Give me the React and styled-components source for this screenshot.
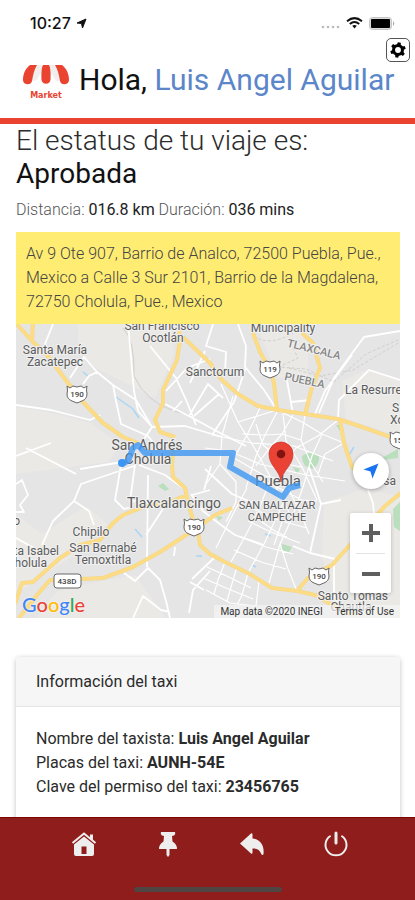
import styled, { createGlobalStyle } from "styled-components"

const red = "#ea432f"
const darkRed = "#8f1d1b"
const blue = "#5b86c9"
const yellow = "#ffec73"
const black = "#2b2b2b"

const yellowRoads = [
  "M-2 -3 L17 18 L31 31 L52 59 L67 78 L87 99 L107 113 L122 119",
  "M17 -3 L16 16",
  "M163 6 L164 16 L161 36 L147 66 L147 79 L139 96 L144 108 L159 113",
  "M157 126 L156 141 L157 153 L169 164 L171 174 L178 200",
  "M167 13 L194 39 L206 56 L222 70 L242 82 L262 86 L289 90 L322 95 L349 104 L386 117",
  "M237 9 L244 28 L254 46 L258 59 L261 86",
  "M286 9 L297 19 L304 44 L296 63 L289 91",
  "M324 96 L328 119 L336 143 L350 158",
  "M386 168 L369 182 L350 203 L334 221 L316 241 L292 254 L281 267",
  "M182 207 L184 221 L194 230 L209 238 L232 249 L256 264 L281 267 L299 271 L316 281 L338 290",
  "M-1 280 L1 274 L6 259 L17 258 L44 234 L64 221 L84 216 L97 199 L107 191 L127 183 L151 179 L171 171",
  "M3 294 L21 271 L34 256 L66 255 L87 254 L117 243 L144 228 L167 213 L181 204 L199 191 L216 184",
]

const whiteRoads = [
  "M37 0 L29 20 L33 30",
  "M0 81 L35 86 L74 96 L84 91",
  "M67 60 L73 52 L81 48 L97 61 L120 76 L136 103",
  "M54 54 L68 33 L81 48",
  "M112 0 L118 67 L122 87 L136 103",
  "M97 61 L100 77 L105 100 L132 112 L145 128",
  "M136 103 L169 102 L206 113",
  "M136 103 L125 120 L106 138 L64 145",
  "M134 22 L160 54 L171 78 L180 101",
  "M194 35 L171 44 L150 67",
  "M149 80 L173 92 L192 60 L207 74",
  "M173 92 L206 110 L230 122",
  "M157 87 L166 77 M178 92 L203 70",
  "M189 27 L174 59 M197 0 L190 22 L210 28 L209 50",
  "M222 0 L230 22 L229 43 L248 66 L261 86",
  "M230 43 L218 78 L196 111",
  "M384 7 L348 13 L318 54 L303 89",
  "M384 56 L353 46 L323 76 L322 95",
  "M336 31 L309 67 L299 90",
  "M270 51 L277 90 M275 78 L295 76",
  "M0 160 L6 156 L12 171 L4 181 L8 188 L0 188",
  "M118 142 L65 160 L58 177 L37 197 L26 221",
  "M58 177 L73 187 L78 201",
  "M105 141 L99 176 L108 185 L116 183",
  "M119 141 L114 177 L131 178 M123 141 L149 151 L167 164",
  "M132 151 L131 243 M130 211 L147 185",
  "M108 249 L119 257 L132 244 L144 256 L150 277 L154 294",
  "M117 294 L127 272 L145 286 L154 288",
  "M173 289 L177 266 L194 247 M176 255 L198 234 M174 258 L188 266",
  "M159 223 L158 232 M175 170 L187 187 L205 201 L219 211 L248 221",
  "M189 145 L216 170 L240 180",
  "M194 166 L176 171 M195 142 L188 166",
  "M325 176 L305 180 L300 202 L294 229 L277 222",
  "M294 229 L319 235 M305 180 L293 143",
  "M352 166 L357 179 L358 190",
  "M318 241 L318 275 L338 290",
  "M0 132 L35 119 M0 214 L18 224 M60 150 L10 124",
]

// the dense street grid round the city centre
const streets = [
  "M205 60 L222 98 L239 125 L255 154 L276 194",
  "M217 72 L206 112 L204 140 L190 160",
  "M222 98 L261 86 L286 98 L306 110 L328 119",
  "M262 86 L249 111 L240 132 L230 164",
  "M244 84 L231 111 L218 134",
  "M277 91 L266 110 L252 126 L240 142",
  "M322 96 L302 112 L280 124 L262 148",
  "M196 111 L236 119 L278 122 L317 137",
  "M189 124 L213 127 L244 140 L290 151 L329 157",
  "M218 134 L249 152 L286 159",
  "M267 90 L270 117 L286 143 L301 176",
  "M289 91 L285 116 L294 137 L307 158",
  "M306 110 L296 132 L287 163 L276 194 L264 220 L253 259",
  "M328 119 L309 130 L302 150",
  "M255 154 L245 180 L233 205 L215 238",
  "M276 161 L262 190 L248 220 L232 249",
  "M231 164 L218 188 L200 224",
  "M238 185 L262 196 L291 204",
  "M232 197 L255 208 L284 219",
  "M225 213 L250 223 L277 230",
  "M218 226 L245 238 L270 245",
  "M264 220 L272 245 L281 267",
  "M255 160 L286 176 L301 177",
  "M246 198 L259 207 L271 213 M266 198 L258 221",
  "M209 238 L202 256 L198 270",
  "M221 243 L215 263 L211 277",
  "M232 249 L226 271 L221 281",
  "M243 257 L240 282",
  "M191 243 L215 254 L235 264",
  "M187 254 L210 264 L237 275",
  "M190 266 L214 279 L239 282",
  "M204 140 L220 158 L220 178 L210 198",
  "M240 100 L247 121 L270 140 L286 143",
  "M226 110 L249 111 L266 110 L285 116",
  "M272 164 L285 190 L293 210",
]

const labels = [
  { x: 39, y: 30, text: "Santa María" },
  { x: 39, y: 42, text: "Zacatepec" },
  { x: 146, y: 6, text: "San Francisco" },
  { x: 147, y: 18, text: "Ocotlán" },
  { x: 267, y: 8, text: "Municipality" },
  { x: 199, y: 52, text: "Sanctorum" },
  { x: 329, y: 70, text: "La Resurre", anchor: "start" },
  { x: 376, y: 88, text: "S", anchor: "start" },
  { x: 374, y: 100, text: "Xo", anchor: "start" },
  { x: 131, y: 126, text: "San Andrés", size: 14 },
  { x: 132, y: 140, text: "Cholula", size: 14 },
  { x: 262, y: 162, text: "Puebla", size: 15 },
  { x: 261, y: 185, text: "SAN BALTAZAR", size: 11 },
  { x: 261, y: 197, text: "CAMPECHE", size: 11 },
  { x: 158, y: 184, text: "Tlaxcalancingo", size: 14 },
  { x: 75, y: 212, text: "Chipilo" },
  { x: 4, y: 201, text: "o", anchor: "end" },
  { x: 43, y: 231, text: "Santa Isabel", anchor: "end" },
  { x: 31, y: 243, text: "Cholula", anchor: "end" },
  { x: 87, y: 228, text: "San Bernabé" },
  { x: 87, y: 240, text: "Temoxtitla" },
  { x: 372, y: 276, text: "Santo Tomas", anchor: "end" },
  { x: 335, y: 287, text: "Chautla" },
  { x: 380, y: 161, text: "Rosa", anchor: "end" },
]

const shields = [
  { x: 61, y: 70, text: "190" },
  { x: 254, y: 45, text: "119" },
  { x: 178, y: 203, text: "190" },
  { x: 303, y: 252, text: "190" },
  { x: 384, y: 116, text: "150" },
]

const Shield = ({ x, y, text }) => (
  <g transform={`translate(${x} ${y})`}>
    <path
      d="M-10 -8 L-7 -6 L-4 -8 L0 -7 L4 -8 L7 -6 L10 -8 Q9 -4 10 0 Q10 5 5 7 L0 9 L-5 7 Q-10 5 -10 0 Q-9 -4 -10 -8 Z"
      fill="#fff"
      stroke="#666"
    />
    <ShieldText y="3">{text}</ShieldText>
  </g>
)

const MapDrawing = () => (
  <MapSvg viewBox="0 0 384 294" preserveAspectRatio="xMidYMid slice" aria-label="Mapa del viaje">
    <rect width="384" height="294" fill="#e5e5e5" />
    <g fill="#ebe9e5">
      <path d="M0 83 L36 89 L75 99 L104 121 L92 138 L0 150 Z" />
      <path d="M62 0 H155 L158 30 L139 74 L116 62 L80 44 L62 28 Z" />
      <path d="M0 190 L26 210 L70 182 L92 200 L60 230 L0 270 Z" />
      <path d="M60 262 L119 251 L150 294 H20 L40 268 Z" />
      <path d="M326 57 L352 45 L384 55 V112 L330 95 Z" />
      <path d="M240 0 H292 L292 56 L262 54 Z" />
      <path d="M308 178 L350 164 L384 173 V294 H330 L306 235 Z" />
    </g>
    <g fill="#b9dfbd">
      <path d="M286 132 Q294 125 303 132 Q304 141 296 145 Q286 143 286 132 Z" />
      <path d="M142 162 l5 -3 l6 6 l-4 2 Z" />
      <path d="M266 220 l10 3 l-3 5 l-8 -2 Z" />
      <path d="M377 185 L384 178 V207 L378 203 Z" />
      <path d="M320 101 l7 0 l-3 6 Z M360 137 l22 -12 v9 Z M277 143 l7 2 l-3 5 Z M200 192 l7 1 l-4 4 Z" />
    </g>
    <g stroke="#a9d6f5" strokeWidth="1.5" fill="none">
      <path d="M100 73 L117 85 L123 94 M67 48 L72 52 M119 205 L126 213 M249 210 l6 2 M236 241 l4 2 M180 232 h6 M333 131 l5 -8" />
    </g>
    <g stroke="#cfcfcf" fill="none">
      <path d="M107 4 Q119 16 118 52 Q130 78 158 87 L178 92" />
      <path d="M238 12 Q253 23 277 9 M277 24 L282 34 L263 43 L290 45 L318 58 L350 30 L384 15" strokeDasharray="3 2" />
      <path d="M273 44 L304 52 L337 46 L384 18" strokeDasharray="3 2" />
    </g>
    <g stroke="#fff" fill="none" strokeLinejoin="round">
      <path d={whiteRoads.join(" ")} strokeWidth="1.8" />
      <path d={streets.join(" ")} strokeWidth="1.2" />
    </g>
    <g fill="none" strokeLinejoin="round">
      <path d={yellowRoads.join(" ")} stroke="#f1d68c" strokeWidth="4" />
      <path d={yellowRoads.join(" ")} stroke="#fddc84" strokeWidth="3" />
    </g>
    {shields.map((shield) => (
      <Shield key={`${shield.x}-${shield.y}`} {...shield} />
    ))}
    <rect x="38" y="250" width="27" height="14" rx="3" fill="#fff" stroke="#666" />
    <ShieldText x="51" y="260">438D</ShieldText>
    {labels.map(({ x, y, text, size, anchor }) => (
      <Label key={`${text}-${y}`} x={x} y={y} $size={size} $anchor={anchor}>
        {text}
      </Label>
    ))}
    <StateLabel transform="translate(297 29) rotate(14)">TLAXCALA</StateLabel>
    <StateLabel transform="translate(288 60) rotate(12)">PUEBLA</StateLabel>
    <path
      d="M107 139 L112 137 L117 124 L122 121 L129 129 L217 129 L214 143 L267 173 L273 164 L284 161"
      stroke="#3c96f3"
      strokeOpacity="0.8"
      strokeWidth="6"
      strokeLinejoin="round"
      fill="none"
    />
    <circle cx="106" cy="139" r="4" fill="#3c96f3" />
    <path
      d="M265 158 C264 146 253 142 253 130 A12 12 0 0 1 277 130 C277 142 266 146 265 158 Z"
      fill="#ea4335"
      stroke="#c5332a"
      strokeWidth="0.7"
    />
    <circle cx="265" cy="130" r="4.3" fill="#811411" />
  </MapSvg>
)

const MarketLogo = () => (
  <LogoWrapper>
    <svg width="48" height="24" viewBox="0 -2 48 24" aria-hidden="true">
      <path d="M14 1 H34 L39 15 Q35 20 32 14 L30 10 H27 L28 1 H20 L21 10 H18 L16 14 Q13 20 9 15 Z" fill="#f1eeee" />
      <path d="M8 1 H15 C12 6 11 11 10 17 A4.600 4.600 0 0 1 1 16 C1 9 4 4 8 1 Z" fill={red} />
      <path d="M21 1 H27 Q29 4 28.500 16 A4.600 4.600 0 0 1 19.500 16 Q19 4 21 1 Z" fill={red} />
      <path d="M33 1 H40 C44 4 47 9 47 16 A4.600 4.600 0 0 1 38 17 C37 11 36 6 33 1 Z" fill={red} />
    </svg>
    <LogoText>Market</LogoText>
  </LogoWrapper>
)

const App = () => (
  <Page>
    <GlobalStyle />
    <Header>
      <StatusBar>
        <Time>
          10:27
          <svg width="11" height="11" viewBox="0 0 11 11" aria-hidden="true">
            <path d="M10 1 L6.500 10 L5.500 5.500 L1 5 Z" fill="#111" stroke="#111" strokeLinejoin="round" />
          </svg>
        </Time>
        <StatusIcons>
          <svg width="19" height="4" viewBox="0 0 19 4" fill="#bbb" aria-hidden="true">
            <circle cx="2" cy="2" r="1.3" />
            <circle cx="7" cy="2" r="1.3" />
            <circle cx="12" cy="2" r="1.3" />
            <circle cx="17" cy="2" r="1.3" />
          </svg>
          <svg width="17" height="12" viewBox="0 0 17 12" fill="none" stroke="#111" strokeWidth="2" aria-hidden="true">
            <path d="M1 4.200 Q8.500 -2 16 4.200" />
            <path d="M3.800 7 Q8.500 3 13.200 7" />
            <path d="M6.200 8.800 Q8.500 7.200 10.800 8.800 L8.500 11.500 Z" fill="#111" stroke="none" />
          </svg>
          <svg width="26" height="13" viewBox="0 0 26 13" aria-hidden="true">
            <rect x="0.500" y="0.500" width="22" height="12" rx="3" fill="#ddd" stroke="#c4c4c4" />
            <rect x="2" y="2" width="19" height="9" rx="1" fill="#000" />
            <path d="M24 4 Q26.500 6.500 24 9 Z" fill="#aaa" />
          </svg>
        </StatusIcons>
      </StatusBar>
      <SettingsButton type="button" aria-label="Ajustes">
        <svg width="16" height="16" viewBox="-9 -9 18 18" aria-hidden="true">
          <circle r="5" fill="none" stroke="#000" strokeWidth="3.4" />
          <g fill="#000">
            {[0, 60, 120, 180, 240, 300].map((angle) => (
              <path key={angle} d="M-2.200 -5 L-1.700 -8.600 H1.700 L2.200 -5 Z" transform={`rotate(${angle + 10})`} />
            ))}
          </g>
        </svg>
      </SettingsButton>
      <Brand>
        <MarketLogo />
        <Greeting>
          Hola, <span>Luis Angel Aguilar</span>
        </Greeting>
      </Brand>
    </Header>
    <Main>
      <Status>
        El estatus de tu viaje es: <strong>Aprobada</strong>
      </Status>
      <Distance>
        Distancia: <b>016.8 km</b> Duración: <b>036 mins</b>
      </Distance>
      <Address>
        Av 9 Ote 907, Barrio de Analco, 72500 Puebla, Pue., Mexico a Calle 3 Sur 2101, Barrio de la
        Magdalena, 72750 Cholula, Pue., Mexico
      </Address>
      <MapWrapper>
        <MapDrawing />
        <GoogleLogo>
          <Letter $color="#4285f4">G</Letter>
          <Letter $color="#ea4335">o</Letter>
          <Letter $color="#fbbc05">o</Letter>
          <Letter $color="#4285f4">g</Letter>
          <Letter $color="#34a853">l</Letter>
          <Letter $color="#ea4335">e</Letter>
        </GoogleLogo>
        <Attribution>
          <span>Map data ©2020 INEGI</span>
          <a href="#terms">Terms of Use</a>
        </Attribution>
        <MapControls>
          <LocateButton type="button" aria-label="Mi ubicación">
            <svg width="16" height="16" viewBox="0 0 16 16" aria-hidden="true">
              <path d="M15.500 0.500 L9.500 15.500 L7.500 8.500 L0.500 6.500 Z" fill="#1a73f0" />
            </svg>
          </LocateButton>
          <ZoomGroup>
            <ZoomButton type="button" aria-label="Acercar">
              <svg width="18" height="18" viewBox="0 0 18 18" aria-hidden="true">
                <path d="M9 0 V18 M0 9 H18" stroke="#5f5f5f" strokeWidth="4" />
              </svg>
            </ZoomButton>
            <ZoomButton type="button" aria-label="Alejar">
              <svg width="18" height="18" viewBox="0 0 18 18" aria-hidden="true">
                <path d="M0 9 H18" stroke="#5f5f5f" strokeWidth="4" />
              </svg>
            </ZoomButton>
          </ZoomGroup>
        </MapControls>
      </MapWrapper>
      <Card>
        <CardHeader>Información del taxi</CardHeader>
        <CardBody>
          <p>
            Nombre del taxista: <b>Luis Angel Aguilar</b>
          </p>
          <p>
            Placas del taxi: <b>AUNH-54E</b>
          </p>
          <p>
            Clave del permiso del taxi: <b>23456765</b>
          </p>
        </CardBody>
      </Card>
    </Main>
    <Footer>
      <Nav>
        <NavLink href="#inicio" aria-label="Inicio">
          <svg width="26" height="26" viewBox="0 0 26 26" aria-hidden="true">
            <path d="M1.500 12 L13 2.500 L24.500 12" fill="none" stroke="#eee" strokeWidth="2" />
            <path d="M19 3.500 H22 V10 L19 7 Z" fill="#eee" />
            <path
              d="M13 5.500 L23 13.500 V23 Q23 25 21 25 H5 Q3 25 3 23 V13.500 Z M10.500 15.500 V23 H15.500 V15.500 Z"
              fill="#eee"
              fillRule="evenodd"
            />
          </svg>
        </NavLink>
        <NavLink href="#viaje" aria-label="Viaje">
          <svg width="26" height="26" viewBox="0 0 26 26" fill="#eee" aria-hidden="true">
            <path d="M6 1 H20 Q21 3 19 4.500 L17 5 L17.500 10.500 Q22 13 22 18 H4 Q4 13 8.500 10.500 L9 5 L7 4.500 Q5 3 6 1 Z" />
            <path d="M11.500 18 H14.500 V24 L13 26 L11.500 24 Z" />
          </svg>
        </NavLink>
        <NavLink href="#regresar" aria-label="Regresar">
          <svg width="26" height="26" viewBox="0 0 26 26" fill="#eee" aria-hidden="true">
            <path d="M1 12.500 L12 2.500 Q13.500 1.500 13.500 3.500 V7.500 C21 8 25.500 14 24.500 23 Q24 24.500 22.500 23.500 C21 19 18 17 13.500 17.500 V21.500 Q13.500 23.500 12 22.500 Z" />
          </svg>
        </NavLink>
        <NavLink href="#salir" aria-label="Salir">
          <svg width="26" height="26" viewBox="0 0 26 26" fill="none" stroke="#eee" aria-hidden="true">
            <path d="M7 5.200 A10.500 10.500 0 1 0 19 5.200" strokeWidth="2" strokeLinecap="round" />
            <path d="M13 2 V12" strokeWidth="3" strokeLinecap="round" />
          </svg>
        </NavLink>
      </Nav>
      <HomeIndicator />
    </Footer>
  </Page>
)

export default App

const GlobalStyle = createGlobalStyle`
  * {
    box-sizing: border-box;
  }
  body {
    margin: 0;
    background-color: #fff;
    color: ${black};
    font-family: Roboto, "Liberation Sans", sans-serif;
    font-size: 16px;
    line-height: 24px;
  }
  h1, h2, p {
    margin: 0;
  }
  button {
    padding: 0;
    border: 0;
    background-color: #fff;
  }
  svg {
    display: block;
  }
`

const Page = styled.div`
  display: flex;
  flex-direction: column;
  height: 100vh;
`

const Header = styled.header`
  display: flex;
  flex-direction: column;
  flex-shrink: 0;
  border-bottom: 6px solid ${red};
`

const StatusBar = styled.div`
  display: flex;
  justify-content: space-between;
  align-items: center;
  padding: 8px 20px 0 30px;
  height: 38px;
`

const Time = styled.span`
  display: flex;
  align-items: center;
  gap: 5px;
  color: #111;
  font-family: Inter, sans-serif;
  font-size: 16px;
  font-weight: 500;
`

const StatusIcons = styled.div`
  display: flex;
  align-items: center;
  gap: 6px;
  svg:first-child {
    margin-top: 8px;
  }
`

const SettingsButton = styled.button`
  display: flex;
  align-items: center;
  justify-content: center;
  align-self: flex-end;
  margin-right: 5px;
  width: 24px;
  height: 24px;
  border: 1px solid #555;
  border-radius: 5px;
`

const Brand = styled.div`
  display: flex;
  align-items: flex-start;
  gap: 9px;
  padding: 0 16px 16px 22px;
`

const LogoWrapper = styled.div`
  display: flex;
  flex-direction: column;
  align-items: center;
  gap: 4px;
`

const LogoText = styled.span`
  color: ${red};
  font-family: "DejaVu Sans", sans-serif;
  font-size: 8px;
  font-weight: bold;
  line-height: 12px;
`

const Greeting = styled.h1`
  color: #111;
  font-size: 30px;
  font-weight: 400;
  line-height: 36px;
  white-space: nowrap;
  span {
    color: ${blue};
  }
`

const Main = styled.main`
  flex: 1;
  min-height: 0;
  padding: 0 15px 0 16px;
  overflow: hidden;
`

const Status = styled.h2`
  font-size: 28px;
  font-weight: 300;
  line-height: 33px;
  strong {
    display: block;
    color: #111;
    font-weight: 400;
  }
`

const Distance = styled.p`
  margin: 8px 0 10px;
  color: #555;
  font-weight: 300;
  b {
    color: #222;
    font-weight: 400;
  }
`

const Address = styled.p`
  padding: 10px;
  background-color: ${yellow};
  color: #444;
  font-weight: 300;
`

const MapWrapper = styled.div`
  position: relative;
  margin-bottom: 39px;
`

const MapSvg = styled.svg`
  width: 100%;
  height: 294px;
`

const Label = styled.text`
  fill: #5c5c5c;
  stroke: #f0f0f0;
  stroke-width: 2px;
  paint-order: stroke;
  font-size: ${({ $size }) => $size || 12}px;
  text-anchor: ${({ $anchor }) => $anchor || "middle"};
`

const StateLabel = styled.text`
  fill: #858585;
  stroke: #f0f0f0;
  stroke-width: 2px;
  paint-order: stroke;
  font-size: 11px;
  font-weight: 500;
  text-anchor: middle;
`

const ShieldText = styled.text`
  fill: #444;
  font-size: 8px;
  font-weight: 500;
  text-anchor: middle;
`

const GoogleLogo = styled.div`
  position: absolute;
  bottom: 2px;
  left: 6px;
  font-family: Lato, sans-serif;
  font-size: 20px;
  font-weight: 500;
  text-shadow: 0 0 2px #fff;
`

const Letter = styled.span`
  color: ${({ $color }) => $color};
`

const Attribution = styled.div`
  position: absolute;
  right: 0;
  bottom: 0;
  display: flex;
  gap: 12px;
  padding: 0 6px;
  background-color: rgba(245, 245, 245, 0.7);
  color: #333;
  font-size: 10px;
  line-height: 13px;
  a {
    color: inherit;
    text-decoration: none;
  }
`

const MapControls = styled.div`
  position: absolute;
  right: 9px;
  bottom: 25px;
  display: flex;
  flex-direction: column;
  align-items: center;
  gap: 24px;
`

const LocateButton = styled.button`
  display: flex;
  align-items: center;
  justify-content: center;
  width: 36px;
  height: 36px;
  border-radius: 50%;
  box-shadow: 0 1px 4px rgba(0, 0, 0, 0.3);
`

const ZoomGroup = styled.div`
  padding: 0 6px;
  border-radius: 2px;
  background-color: #fff;
  box-shadow: 0 1px 4px rgba(0, 0, 0, 0.2);
`

const ZoomButton = styled.button`
  display: flex;
  align-items: center;
  justify-content: center;
  width: 29px;
  height: 40px;
  & + & {
    border-top: 1px solid #e3e3e3;
  }
`

const Card = styled.section`
  border-radius: 4px;
  box-shadow: 0 1px 5px rgba(0, 0, 0, 0.25);
`

const CardHeader = styled.div`
  padding: 13px 20px 12px;
  border-bottom: 1px solid #e4e4e4;
  border-radius: 4px 4px 0 0;
  background-color: #f6f6f6;
`

const CardBody = styled.div`
  padding: 20px 20px 40px;
  b {
    font-weight: 700;
  }
`

const Footer = styled.footer`
  display: flex;
  flex-direction: column;
  align-items: center;
  justify-content: space-between;
  flex-shrink: 0;
  padding: 13px 0 8px;
  height: 83px;
  border-top: 1px solid #7d0504;
  background-color: ${darkRed};
`

const Nav = styled.nav`
  display: flex;
  justify-content: space-around;
  padding: 0 9% 0 10%;
  width: 100%;
`

const NavLink = styled.a`
  display: block;
`

const HomeIndicator = styled.div`
  width: 148px;
  height: 5px;
  border-radius: 3px;
  background-color: #4f4543;
`
